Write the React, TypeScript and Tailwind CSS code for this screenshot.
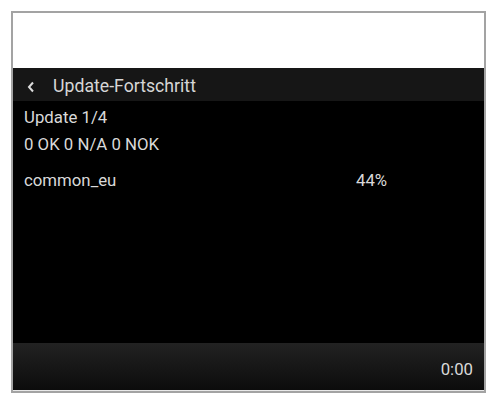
import React from "react";

const rows = [{ name: "common_eu", progress: "44%" }];

const App = () => {
  return (
    <div className="w-[497px] h-[404px] bg-white pt-[11px] pl-[11px] font-['Roboto',sans-serif]">
      <div className="w-[475px] h-[382px] border-2 border-[#a3a3a3] flex flex-col bg-white">
        <div className="h-[55px] bg-white" />
        {/* header */}
        <div className="h-[33px] bg-[#161616] flex items-center pt-[4px] text-[#d6d6d6]">
          <svg width="10" height="12" viewBox="0 0 10 12" className="ml-[13px]">
            <path d="M7 1.5 L3 6 L7 10.5" fill="none" stroke="#dcdcdc" strokeWidth="2" />
          </svg>
          <span className="ml-[17px] text-[17.7px] leading-none">Update-Fortschritt</span>
        </div>
        {/* body */}
        <div className="h-[242px] bg-black text-[#d9d9d9] pl-[11px] pr-[11px] pt-[6px]">
          <div className="text-[16.8px] leading-[20px]">Update 1/4</div>
          <div className="text-[16.8px] leading-[20px] mt-[7px]">0 OK 0 N/A 0 NOK</div>
          {rows.map((row) => (
            <div key={row.name} className="flex mt-[16px] text-[16.8px] leading-[20px]">
              <span className="w-[332px]">{row.name}</span>
              <span>{row.progress}</span>
            </div>
          ))}
        </div>
        {/* footer */}
        <div className="flex-1 bg-[linear-gradient(to_bottom,#222222,#0c0c0c)] flex items-center justify-end pr-[11px] pt-[6px] text-[#d9d9d9] text-[16.8px] border-b border-[#e8e8e8]">
          0:00
        </div>
      </div>
    </div>
  );
};

export default App;
